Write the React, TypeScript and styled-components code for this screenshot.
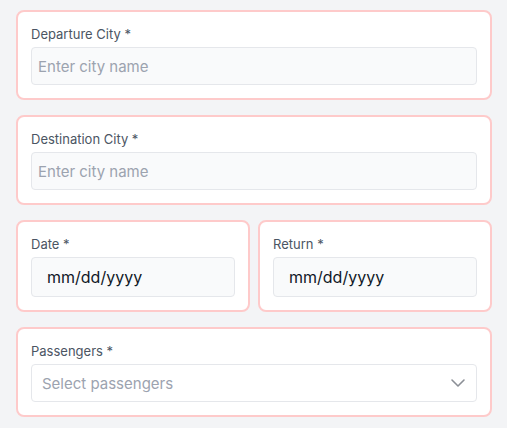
import * as React from 'react';
import styled, { createGlobalStyle } from 'styled-components';

const GlobalStyle = createGlobalStyle`
  html, body {
    margin: 0;
    padding: 0;
    background: #f3f4f6;
  }

  body {
    font-family: Inter, 'Noto Sans', sans-serif;
  }

  * {
    box-sizing: border-box;
  }
`;

const Form = styled.form`
  display: flex;
  flex-direction: column;
  gap: 15px;
  margin: 0;
  padding: 10px 15px 10px 16px;
`;

const Row = styled.div`
  display: grid;
  grid-template-columns: 1fr 1fr;
  gap: 8px;
`;

const Card = styled.div`
  display: flex;
  flex-direction: column;
  gap: 4px;
  padding: 13px;
  border: 2px solid #fecaca;
  border-radius: 8px;
  background: #fff;
`;

const Label = styled.label`
  display: block;
  color: #4b5563;
  font-size: 13px;
  line-height: 18px;
`;

const TextInput = styled.input<{ $filled?: boolean }>`
  width: 100%;
  height: ${p => (p.$filled ? '40px' : '38px')};
  padding: 0 0 0 ${p => (p.$filled ? '15px' : '6px')};
  border: 1px solid #e5e7eb;
  border-radius: 4px;
  background: #f9fafb;
  color: #111827;
  font-family: inherit;
  font-size: ${p => (p.$filled ? '16px' : '15px')};
  outline: none;

  &::placeholder {
    color: ${p => (p.$filled ? '#111827' : '#9ca3af')};
    opacity: 1;
  }
`;

const SelectWrap = styled.div`
  position: relative;
`;

const Select = styled.select`
  width: 100%;
  height: 38px;
  padding: 0 32px 0 10px;
  border: 1px solid #e5e7eb;
  border-radius: 4px;
  background: #fff;
  color: #9ca3af;
  font-family: inherit;
  font-size: 15px;
  appearance: none;
  -webkit-appearance: none;
  outline: none;
`;

const Chevron = styled.span`
  position: absolute;
  top: 50%;
  right: 7px;
  width: 24px;
  height: 24px;
  color: #8b8f96;
  transform: translateY(-50%);
  pointer-events: none;

  svg {
    display: block;
    width: 100%;
    height: 100%;
  }
`;

const Field: React.FC<{ id: string; label: string; children: React.ReactNode }> = ({
  id,
  label,
  children,
}) => (
  <Card>
    <Label htmlFor={id}>{label}</Label>
    {children}
  </Card>
);

export default function App() {
  return (
    <>
      <GlobalStyle />
      <Form onSubmit={event => event.preventDefault()}>
        <Field id="departure" label="Departure City *">
          <TextInput id="departure" type="text" placeholder="Enter city name" />
        </Field>
        <Field id="destination" label="Destination City *">
          <TextInput id="destination" type="text" placeholder="Enter city name" />
        </Field>
        <Row>
          <Field id="date" label="Date *">
            <TextInput id="date" $filled type="text" placeholder="mm/dd/yyyy" />
          </Field>
          <Field id="return" label="Return *">
            <TextInput id="return" $filled type="text" placeholder="mm/dd/yyyy" />
          </Field>
        </Row>
        <Field id="passengers" label="Passengers *">
          <SelectWrap>
            <Select id="passengers" defaultValue="">
              <option value="" disabled>
                Select passengers
              </option>
              <option value="1">1 Passenger</option>
              <option value="2">2 Passengers</option>
              <option value="3">3 Passengers</option>
              <option value="4">4+ Passengers</option>
            </Select>
            <Chevron>
              <svg viewBox="0 0 24 24" fill="none" stroke="currentColor" strokeWidth="1.6" strokeLinecap="round" strokeLinejoin="round">
                <path d="M6 9l6 6 6-6" />
              </svg>
            </Chevron>
          </SelectWrap>
        </Field>
      </Form>
    </>
  );
}
